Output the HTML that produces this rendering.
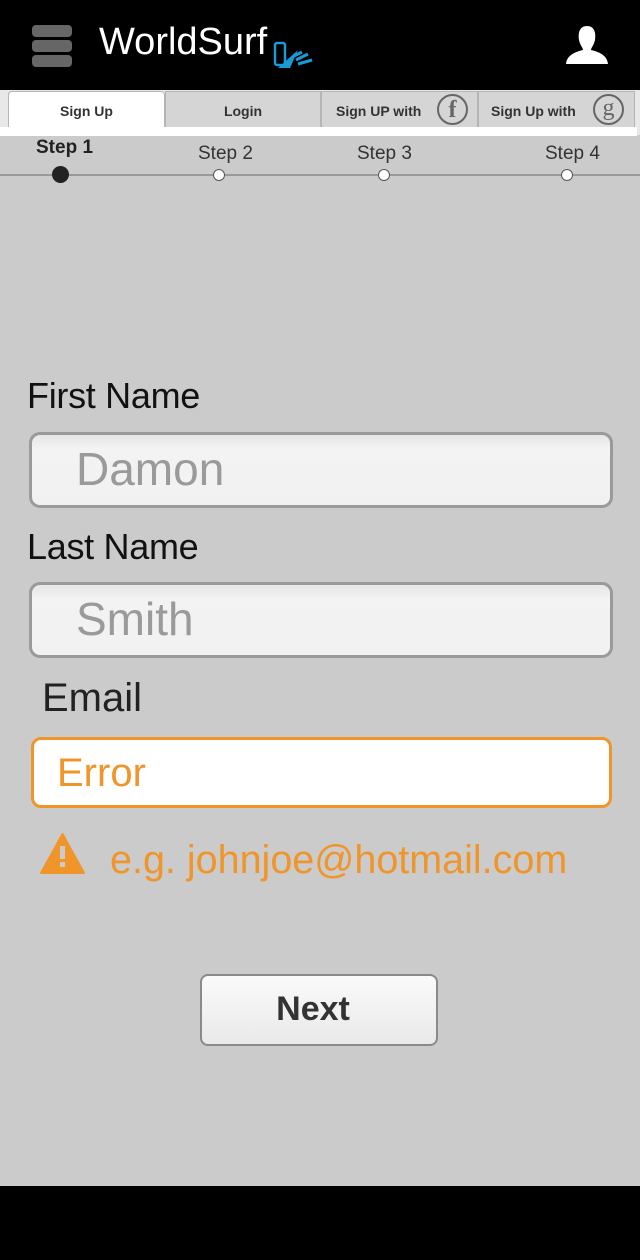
<!DOCTYPE html>
<html><head><meta charset="utf-8"><style>
*{margin:0;padding:0;box-sizing:border-box}
body{width:640px;height:1260px;background:#cbcbcb;font-family:"Liberation Sans",sans-serif;position:relative;overflow:hidden}
.a{position:absolute}
.tab{position:absolute;top:91px;height:37px;background:#d5d5d5;border:1px solid #b5b5b5;border-bottom:none;font-size:14px;font-weight:bold;color:#333;line-height:38px}
.inp{position:absolute;left:29px;width:584px;height:76px;border:3px solid #9a9a9a;border-radius:11px;background:linear-gradient(#e6e6e6,#f3f3f3 20%,#f1f1f1);color:#9a9a9a;font-size:46px;padding-left:44px;line-height:68px}
.lbl{position:absolute;left:27px;font-size:36px;color:#111;letter-spacing:-0.3px}
.dot{position:absolute;top:169px;width:12px;height:12px;border-radius:50%;background:#fff;border:1px solid #555}
.st{position:absolute;top:143px;font-size:19px;color:#333}
</style></head><body>
<div class="a" style="left:0;top:0;width:640px;height:90px;background:#000"></div>
<div class="a" style="left:32px;top:25px;width:40px;height:12px;background:#666;border-radius:4px"></div>
<div class="a" style="left:32px;top:40px;width:40px;height:12px;background:#666;border-radius:4px"></div>
<div class="a" style="left:32px;top:55px;width:40px;height:12px;background:#666;border-radius:4px"></div>
<div class="a" style="left:99px;top:21px;font-size:38px;color:#fff;letter-spacing:0">WorldSurf</div>
<svg class="a" style="left:272px;top:40px" width="45" height="46" viewBox="0 0 45 46">
<rect x="3" y="3" width="10" height="22" rx="2" fill="none" stroke="#1a9ad6" stroke-width="2.5"/>
<path d="M6 28 L26 10 L18 28 Z" fill="#1a9ad6"/>
<path d="M22 16 L30 12 M24 20 L36 14 M26 24 L40 20" stroke="#1a9ad6" stroke-width="3"/>
</svg>
<svg class="a" style="left:565px;top:24px" width="44" height="42" viewBox="0 0 44 42">
<path d="M22 2 C14 2 13 10 14 16 C15 21 18 24 18 26 C10 28 2 31 1 40 L43 40 C42 31 34 28 26 26 C26 24 29 21 30 16 C31 10 30 2 22 2 Z" fill="#fff"/>
</svg>
<div class="a" style="left:0;top:90px;width:640px;height:45px;background:#e8e8e8"></div>
<div class="tab" style="left:8px;width:157px;background:#fff;text-align:center;border-radius:4px 4px 0 0">Sign Up</div>
<div class="tab" style="left:165px;width:156px;text-align:center">Login</div>
<div class="tab" style="left:321px;width:157px;padding-left:14px">Sign UP with</div>
<div class="tab" style="left:478px;width:157px;padding-left:12px">Sign Up with</div>
<div class="a" style="left:437px;top:94px;width:31px;height:31px;border:2px solid #666;border-radius:50%;color:#666;font:bold 24px 'Liberation Serif',serif;text-align:center;line-height:28px">f</div>
<div class="a" style="left:593px;top:94px;width:31px;height:31px;border:2px solid #666;border-radius:50%;color:#666;font:24px 'Liberation Serif',serif;text-align:center;line-height:24px">g</div>
<div class="a" style="left:0;top:127px;width:637px;height:9px;background:#fff"></div>
<div class="a" style="left:0;top:174px;width:640px;height:2px;background:#999"></div>
<div class="st" style="left:36px;top:137px;font-weight:bold;color:#222">Step 1</div>
<div class="st" style="left:198px">Step 2</div>
<div class="st" style="left:357px">Step 3</div>
<div class="st" style="left:545px">Step 4</div>
<div class="a" style="left:52px;top:166px;width:17px;height:17px;border-radius:50%;background:#222"></div>
<div class="dot" style="left:213px"></div>
<div class="dot" style="left:378px"></div>
<div class="dot" style="left:561px"></div>
<div class="lbl" style="top:375px">First Name</div>
<div class="inp" style="top:432px">Damon</div>
<div class="lbl" style="top:526px">Last Name</div>
<div class="inp" style="top:582px">Smith</div>
<div class="lbl" style="left:42px;top:676px;font-size:40px;color:#222;letter-spacing:0">Email</div>
<div class="a" style="left:31px;top:737px;width:581px;height:71px;border:3px solid #f0952a;border-radius:10px;background:#fff;color:#f0952a;font-size:40px;padding-left:23px;line-height:66px">Error</div>
<svg class="a" style="left:40px;top:832px" width="45" height="43" viewBox="0 0 45 43">
<path d="M22.5 2 L44 41 L1 41 Z" fill="#f0952a" stroke="#f0952a" stroke-width="2" stroke-linejoin="round"/>
<rect x="20" y="14" width="5" height="13" fill="#cbcbcb"/><rect x="20" y="30" width="5" height="5" fill="#cbcbcb"/>
</svg>
<div class="a" style="left:110px;top:838px;font-size:39.5px;color:#f0952a">e.g. johnjoe@hotmail.com</div>
<div class="a" style="left:200px;top:974px;width:238px;height:72px;border:2px solid #8a8a8a;border-radius:8px;background:linear-gradient(#fafafa,#e9e9e9);text-align:center;font-size:34px;font-weight:bold;color:#333;line-height:66px;padding-right:12px">Next</div>
<div class="a" style="left:0;top:1186px;width:640px;height:74px;background:#000"></div>
</body></html>
